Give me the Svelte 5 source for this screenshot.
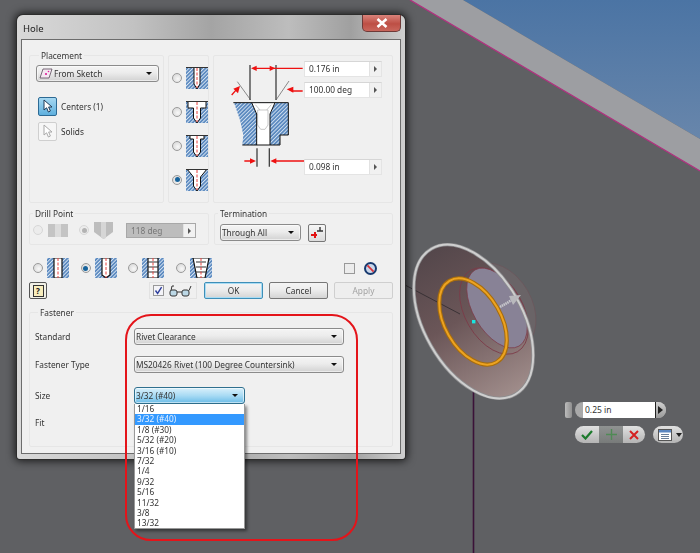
<script lang="ts">
  // Inventor "Hole" dialog over a sketch in the 3D viewport
  const sizes = ["1/16", "3/32 (#40)", "1/8 (#30)", "5/32 (#20)", "3/16 (#10)", "7/32", "1/4", "9/32", "5/16", "11/32", "3/8", "13/32"]
  let size = $state("3/32 (#40)")

  const holeTypes = [
    { path: "M8 0V17L11 22L14 17V0Z", selected: false },
    { path: "M2 0V7H7.5V17L11 22L14.5 17V7H20V0Z", selected: false },
    { path: "M4 0V4H7.5V17L11 22L14.5 17V4H18V0Z", selected: false },
    { path: "M1 0L7.5 8V17L11 22L14.5 17V8L21 0Z", selected: true },
  ]
  const threadTypes = [
    { path: "M7 0V20H15V0Z", threaded: false, selected: false },
    { path: "M7 0V17L11 20L15 17V0Z", threaded: false, selected: true },
    { path: "M6 0V20H16V0Z", threaded: true, selected: false },
    { path: "M3 0L7 20H15L19 0Z", threaded: true, selected: false },
  ]
</script>

{#snippet radio(checked: boolean, disabled = false)}
  <span class="radio" class:checked class:disabled></span>
{/snippet}

{#snippet spinner(value: string, disabled = false)}
  <div class="spinner" class:disabled>
    <span class="value">{value}</span>
    <span class="spin-arrow"></span>
  </div>
{/snippet}

{#snippet select(value: string, cls = "")}
  <div class="select {cls}">
    <span class="select-text">{value}</span>
    <span class="caret"></span>
  </div>
{/snippet}

{#snippet cursor(color: string)}
  <svg width="12" height="14" viewBox="0 0 12 14">
    <path d="M2 1V11L4.6 8.8L6.4 13L8.4 12L6.6 8H10Z" fill="#fff" stroke={color} stroke-width="1" />
  </svg>
{/snippet}

<div class="canvas">
  <svg class="scene" width="700" height="553" viewBox="0 0 700 553">
    <defs>
      <pattern id="hatch" width="2.6" height="2.6" patternUnits="userSpaceOnUse" patternTransform="rotate(45)">
        <rect width="2.6" height="2.6" fill="#5585bd" />
        <rect width="1" height="2.6" fill="#d5e3f2" />
      </pattern>
      <pattern id="hatch-big" width="8" height="8" patternUnits="userSpaceOnUse" patternTransform="rotate(45)">
        <rect width="8" height="8" fill="#5585bd" />
        <rect width="3" height="8" fill="#cfdff0" />
      </pattern>
      <linearGradient id="sky" x1="0" y1="0" x2="0" y2="1">
        <stop offset="0" stop-color="#4b74a4" />
        <stop offset="1" stop-color="#6886ab" />
      </linearGradient>
      <linearGradient id="cone" x1="0" y1="0" x2="1" y2="0">
        <stop offset="0" stop-color="#54474b" />
        <stop offset="0.45" stop-color="#6b5658" />
        <stop offset="1" stop-color="#a08d8b" />
      </linearGradient>
    </defs>
    <rect width="700" height="553" fill="#5f6063" />
    <polygon points="463,0 700,0 700,139" fill="url(#sky)" />
    <polygon points="410,0 463,0 700,139 700,171" fill="#9d9ea2" />
    <line x1="410" y1="0" x2="700" y2="171" stroke="#b0327f" stroke-width="1.4" />

    <line x1="473.5" y1="322" x2="473.5" y2="553" stroke="#3b1238" stroke-width="1.6" />
    <ellipse cx="499" cy="307" rx="47" ry="33" transform="rotate(60 499 307)" fill="#6a6467" stroke="#6b565c" stroke-width="0.7" />
    <g transform="translate(473.5 321.5) rotate(60)">
      <ellipse rx="84" ry="49" fill="url(#cone)" />
    </g>
    <ellipse cx="494" cy="311" rx="47" ry="29" transform="rotate(60 494 311)" fill="none" stroke="#7c3a48" stroke-width="0.8" />
    <ellipse cx="497" cy="308" rx="44" ry="24" transform="rotate(60 497 308)" fill="#888296" stroke="#7c3a48" stroke-width="0.7" />
    <line x1="405" y1="285" x2="460" y2="314" stroke="#2f2a2d" stroke-width="0.8" />
    <ellipse cx="473" cy="321.5" rx="47" ry="28" transform="rotate(60 473 321.5)" fill="none" stroke="#a86d0d" stroke-width="4.2" />
    <ellipse cx="473" cy="321.5" rx="47" ry="28" transform="rotate(60 473 321.5)" fill="none" stroke="#eda321" stroke-width="2" />
    <g transform="translate(473.5 321.5) rotate(60)">
      <ellipse rx="84" ry="49" fill="none" stroke="#8e8e90" stroke-width="3.6" />
      <ellipse rx="84" ry="49" fill="none" stroke="#cfcfcf" stroke-width="2" />
    </g>
    <line x1="500" y1="307" x2="512" y2="300" stroke="#c8c8cc" stroke-width="2.6" stroke-dasharray="1.5 0.6" />
    <polygon points="509,296 521,295 513,305" fill="#b9b9bd" />
    <rect x="472" y="320" width="3.4" height="3.4" fill="#19e6e0" />
  </svg>

  <section class="dialog">
    <header class="titlebar">
      <span class="title">Hole</span>
      <button class="close" aria-label="Close">
        <svg width="12" height="10" viewBox="0 0 12 10">
          <path d="M1.5 1L10.5 9M10.5 1L1.5 9" stroke="#fff" stroke-width="2.6" />
        </svg>
      </button>
    </header>

    <div class="client">
      <div class="top-row">
        <fieldset class="placement">
          <legend>Placement</legend>
          <div class="select">
            <svg class="sketch-icon" width="14" height="11" viewBox="0 0 14 11">
              <path d="M4 1H13L10 10H1Z" fill="#f4e8f2" stroke="#5b4a5a" stroke-width="0.8" />
              <circle cx="7" cy="6" r="1.1" fill="#e0209a" />
              <circle cx="9.5" cy="3.5" r="0.8" fill="#e0209a" />
            </svg>
            <span class="select-text">From Sketch</span>
            <span class="caret"></span>
          </div>
          <div class="pick-list">
            <div class="pick">
              <span class="pick-btn active">{@render cursor("#1d3a58")}</span>
              <span>Centers (1)</span>
            </div>
            <div class="pick">
              <span class="pick-btn">{@render cursor("#a9a9a9")}</span>
              <span>Solids</span>
            </div>
          </div>
        </fieldset>

        <fieldset class="hole-types">
          <legend class="blank"></legend>
          {#each holeTypes as t}
            <div class="type-row">
              {@render radio(t.selected)}
              <svg width="22" height="22" viewBox="0 0 22 22">
                <rect width="22" height="22" fill="url(#hatch)" />
                <path d={t.path} fill="#fff" stroke="#111" stroke-width="1" />
                <line x1="0" y1="0.5" x2="22" y2="0.5" stroke="#333" stroke-width="1" />
                <line x1="11" y1="1" x2="11" y2="21" stroke="#e8413c" stroke-width="1" stroke-dasharray="3 1.5" />
              </svg>
            </div>
          {/each}
        </fieldset>

        <fieldset class="dims">
          <legend class="blank"></legend>
          <div class="dims-body">
            <svg width="90" height="141" viewBox="12 153 270 423">
              <path d="M72 278H235V375H210V405H97L100 375L90 330Z" fill="url(#hatch-big)" />
              <path d="M125 278L140 312V405H180V312L195 278Z" fill="#fff" />
              <path d="M143 300H174V345L165 358H152L143 345Z M136 284L150 300M184 284L170 300" fill="none" stroke="#bdbdbd" stroke-width="2.5" />
              <path d="M70 278H235V375H210V405H97M125 278L140 312V405M195 278L180 312V405" fill="none" stroke="#111" stroke-width="3" />
              <path d="M120 165V270M198 165V270M141 415V470M178 415V470" stroke="#444" stroke-width="4" fill="none" />
              <path d="M82 215L122 270M237 213L198 270" stroke="#555" stroke-width="2" fill="none" />
              <path d="M135 175H278M103 453H130M192 453H283M65 255L80 238M278 243H245" stroke="#ee1111" stroke-width="4" fill="none" />
              <path d="M123 175L140 167V183ZM196 175L179 167V183ZM138 453L120 445V461ZM181 453L199 445V461ZM90 228L84 250L70 236ZM230 238L250 230V248Z" fill="#ee1111" />
            </svg>
            <div class="dims-inputs">
              {@render spinner("0.176 in")}
              {@render spinner("100.00 deg")}
              <div class="dims-spacer"></div>
              {@render spinner("0.098 in")}
            </div>
          </div>
        </fieldset>
      </div>

      <div class="mid-row">
        <fieldset class="drill">
          <legend>Drill Point</legend>
          <div class="drill-body">
            {@render radio(false, true)}
            <svg width="20" height="15" viewBox="0 0 20 15">
              <rect y="1" width="20" height="13" fill="#c4c4c4" />
              <rect x="7" y="1" width="6" height="13" fill="#dcdcdc" />
            </svg>
            <span class="radio-gap">{@render radio(true, true)}</span>
            <svg width="19" height="17" viewBox="0 0 19 17">
              <path d="M0 0H19V10L9.5 17L0 10Z" fill="#bdbdbd" />
              <path d="M7 0H12V16L9.5 17L7 15Z" fill="#d6d6d6" />
            </svg>
            <span class="drill-angle">{@render spinner("118 deg", true)}</span>
          </div>
        </fieldset>

        <fieldset class="termination">
          <legend>Termination</legend>
          <div class="term-body">
            {@render select("Through All", "term-select")}
            <span class="flip">
              <svg width="14" height="13" viewBox="0 0 14 13">
                <path d="M1 9H7M5 12V6" stroke="#e21212" stroke-width="2" fill="none" />
                <path d="M7 5H13M10 1V5" stroke="#333" stroke-width="1.4" fill="none" />
              </svg>
            </span>
          </div>
        </fieldset>
      </div>

      <div class="icon-row">
        {#each threadTypes as t}
          <div class="thread-item">
            {@render radio(t.selected)}
            <svg width="22" height="20" viewBox="0 0 22 20">
              <rect width="22" height="20" fill="url(#hatch)" />
              <path d={t.path} fill="#fff" stroke="#111" stroke-width="1.2" />
              {#if t.threaded}
                <path d="M6 4H16M6 9H16M6 14H16" stroke="#333" stroke-width="1.2" />
              {/if}
              <line x1="11" y1="0" x2="11" y2="20" stroke="#e8413c" stroke-width="1" stroke-dasharray="3 1.5" />
            </svg>
          </div>
        {/each}
        <div class="icon-row-end">
          <span class="check"></span>
          <svg width="13" height="13" viewBox="0 0 13 13">
            <circle cx="6.5" cy="6.5" r="5.5" fill="#c8d6ea" stroke="#17396f" stroke-width="2" />
            <path d="M3.4 3.4L9.6 9.6" stroke="#d8333a" stroke-width="1.8" />
          </svg>
        </div>
      </div>

      <div class="button-row">
        <button class="help" aria-label="Help">
          <span class="help-mark">?</span>
        </button>
        <div class="preview">
          <span class="check checked">
            <svg width="9" height="9" viewBox="0 0 9 9">
              <path d="M1.5 4.5L3.6 7.4L7.6 1.2" stroke="#2f3f9c" stroke-width="1.4" fill="none" />
            </svg>
          </span>
          <svg width="23" height="12" viewBox="0 0 23 12">
            <path d="M2 5.5L3 1H5M8 7H13M20 5.5L22 1" stroke="#333" fill="none" />
            <rect x="1" y="5" width="7" height="6" rx="2" fill="#bcd8e6" stroke="#333" />
            <rect x="13" y="5" width="7" height="6" rx="2" fill="#bcd8e6" stroke="#333" />
          </svg>
        </div>
        <button class="btn default">OK</button>
        <button class="btn">Cancel</button>
        <button class="btn ghost">Apply</button>
      </div>

      <fieldset class="fastener">
        <legend>Fastener</legend>
        <div class="form">
          <span class="form-label">Standard</span>
          {@render select("Rivet Clearance")}
          <span class="form-label">Fastener Type</span>
          {@render select("MS20426 Rivet (100 Degree Countersink)")}
          <span class="form-label">Size</span>
          <div class="size-wrap">
            {@render select(size, "open")}
            <ul class="menu">
              {#each sizes as s}
                <li class:current={s === size}>{s}</li>
              {/each}
            </ul>
          </div>
          <span class="form-label">Fit</span>
          <span class="fit-slot"></span>
        </div>
      </fieldset>
    </div>
  </section>

  <div class="callout"></div>

  <div class="mini">
    <div class="mini-top">
      <span class="grip"></span>
      <div class="mini-input">
        <span class="mini-value">0.25 in</span>
        <span class="mini-arrow"></span>
      </div>
    </div>
    <div class="mini-bottom">
      <div class="pill">
        <span class="seg">
          <svg width="12" height="10" viewBox="0 0 12 10"><path d="M1 5L4.5 8.5L11 1" stroke="#1c7a2c" stroke-width="2.2" fill="none" /></svg>
        </span>
        <span class="seg off">
          <svg width="11" height="11" viewBox="0 0 11 11"><path d="M5.5 0V11M0 5.5H11" stroke="#4f8a55" stroke-width="1.4" /></svg>
        </span>
        <span class="seg last">
          <svg width="10" height="10" viewBox="0 0 10 10"><path d="M1 1L9 9M9 1L1 9" stroke="#d42020" stroke-width="2" /></svg>
        </span>
      </div>
      <div class="pill menu-pill">
        <svg width="14" height="12" viewBox="0 0 14 12">
          <rect x="0.5" y="0.5" width="13" height="11" fill="#fff" stroke="#555" />
          <rect x="1" y="1" width="12" height="2.5" fill="#5b86c0" />
          <path d="M3 5.5H11M3 7.5H11M3 9.5H11" stroke="#6a7f9a" />
        </svg>
        <span class="pill-caret"></span>
      </div>
    </div>
  </div>
</div>

<style>
  :global(body) {
    margin: 0;
    overflow: hidden;
  }

  .canvas {
    position: relative;
    width: 700px;
    height: 553px;
    overflow: hidden;
    font-family: "Noto Sans", "Liberation Sans", sans-serif;
    font-size: 8.3px;
    color: #333;
  }
  .scene {
    position: absolute;
    inset: 0;
  }

  /* window */
  .dialog {
    position: absolute;
    left: 17px;
    top: 15px;
    width: 388px;
    height: 444px;
    box-sizing: border-box;
    padding: 0 4px;
    border-radius: 6px 6px 3px 3px;
    background: linear-gradient(90deg, #d9d9d9, #c2c2c2 30%, #a4a4a4 50%, #bdbdbd 70%, #a0a0a0 86%, #cfcfcf);
    box-shadow: 0 0 0 1px #2d2d2d, 0 0 9px 2px rgba(0, 0, 0, 0.75);
    filter: blur(0.3px);
  }
  .titlebar {
    display: flex;
    align-items: flex-start;
    justify-content: space-between;
    height: 24px;
  }
  .title {
    margin: 7px 0 0 2px;
    font-size: 9.5px;
    color: #222;
  }
  .close {
    width: 39px;
    height: 17px;
    padding: 0;
    margin: 0;
    display: flex;
    align-items: center;
    justify-content: center;
    border: 1px solid #6e3a38;
    border-top: 0;
    border-radius: 0 0 5px 5px;
    background: linear-gradient(#d9827a, #bd4f45 55%, #c9665c);
  }
  .client {
    height: 415px;
    box-sizing: border-box;
    padding: 9.5px 7px 0;
    border: 1px solid #6c6c6c;
    background: #f0f0f0;
  }

  /* group boxes */
  fieldset {
    margin: 0;
    min-width: 0;
    padding: 0;
    border: 1px solid #e6e6e6;
    border-radius: 2px;
    box-sizing: border-box;
  }
  legend {
    margin-left: 3px;
    padding: 0 2px;
    height: 11px;
    line-height: 11px;
    font-size: 8.3px;
    color: #333;
  }
  legend.blank {
    width: 0;
    padding: 0;
    margin: 0;
  }

  .top-row {
    display: grid;
    grid-template-columns: 135px 41px 180px;
    column-gap: 4px;
    height: 153.5px;
  }
  .placement {
    padding: 4px 4px 0 6px;
  }
  .pick-list {
    display: flex;
    flex-direction: column;
    gap: 6px;
    margin: 15px 0 0 2px;
  }
  .pick {
    display: flex;
    align-items: center;
    gap: 4px;
  }
  .pick-btn {
    display: flex;
    align-items: center;
    justify-content: center;
    width: 19px;
    height: 19px;
    box-sizing: border-box;
    border: 1px solid #cfcfcf;
    border-radius: 2px;
    background: #f6f6f6;
  }
  .pick-btn.active {
    border-color: #2d6a94;
    background: linear-gradient(#a6d8f2, #5fb0de);
  }

  .hole-types {
    display: flex;
    flex-direction: column;
    gap: 12px;
    padding: 6px 0 0 3px;
  }
  .type-row {
    display: flex;
    align-items: center;
    gap: 4px;
  }

  .dims-body {
    display: flex;
  }
  .dims-inputs {
    display: flex;
    flex-direction: column;
    gap: 5px;
    width: 78px;
  }
  .dims-spacer {
    height: 51px;
  }

  .spinner {
    display: flex;
    align-items: center;
    justify-content: space-between;
    height: 16px;
    box-sizing: border-box;
    border: 1px solid #e4e4e4;
    border-top-color: #d6d6d6;
    background: #fff;
    font-size: 8.3px;
  }
  .spinner .value {
    padding-left: 4px;
  }
  .spin-arrow {
    width: 11px;
    height: 100%;
    flex: none;
    position: relative;
    background: #f1f1f1;
    border-left: 1px solid #e2e2e2;
  }
  .spin-arrow::after {
    content: "";
    position: absolute;
    left: 4px;
    top: 4px;
    border-left: 3px solid #555;
    border-top: 3px solid transparent;
    border-bottom: 3px solid transparent;
  }
  .spinner.disabled {
    border-color: #a8a8a8;
    background: #bdbdbd;
    color: #777;
    height: 15px;
  }

  /* combos */
  .select {
    display: flex;
    align-items: center;
    height: 17px;
    box-sizing: border-box;
    padding: 0 6px 0 1px;
    border: 1px solid #8b8b8b;
    border-radius: 3px;
    background: linear-gradient(#f4f4f4, #ececec 45%, #d2d2d2);
    box-shadow: inset 0 0 0 1px rgba(255, 255, 255, 0.55);
  }
  .select-text {
    flex: 1;
    white-space: nowrap;
  }
  .sketch-icon {
    margin: 0 1px 0 1px;
  }
  .caret {
    flex: none;
    border-top: 3px solid #111;
    border-left: 3px solid transparent;
    border-right: 3px solid transparent;
  }
  .select.open {
    border-color: #2f708f;
    background: linear-gradient(#d9f0fb, #a9dbf4 50%, #6cbde8);
  }

  .mid-row {
    display: grid;
    grid-template-columns: 180px 179px;
    column-gap: 5px;
    margin-top: 4.5px;
    height: 37.5px;
  }
  .drill-body {
    display: flex;
    align-items: center;
    height: 100%;
    padding: 0 0 0 3px;
    margin-top: -1px;
  }
  .drill-body > svg {
    margin-left: 5px;
  }
  .radio-gap {
    display: flex;
    margin-left: 11px;
  }
  .drill-angle {
    width: 70px;
    margin-left: 13px;
  }
  .term-body {
    display: flex;
    align-items: center;
    gap: 7px;
    padding: 5px 0 0 5px;
  }
  .term-body :global(.term-select) {
    width: 81px;
  }
  .flip {
    display: flex;
    align-items: center;
    justify-content: center;
    width: 18px;
    height: 18px;
    box-sizing: border-box;
    border: 1px solid #777;
    border-radius: 2px;
    background: linear-gradient(#f6f6f6, #dcdcdc);
  }

  .radio {
    display: block;
    flex: none;
    position: relative;
    width: 10px;
    height: 10px;
    box-sizing: border-box;
    border: 1px solid #9a9a9a;
    border-radius: 50%;
    background: radial-gradient(circle at 60% 60%, #f8f8f8, #d2d2d2);
  }
  .radio.checked::after {
    content: "";
    position: absolute;
    inset: 1.5px;
    border-radius: 50%;
    background: #17639c;
  }
  .radio.disabled {
    border-color: #d6d6d6;
    background: #ececec;
  }
  .radio.disabled.checked::after {
    background: #b3b3b3;
  }

  .icon-row {
    display: flex;
    align-items: center;
    gap: 11.5px;
    height: 20px;
    margin-top: 13px;
    padding-left: 4px;
  }
  .thread-item {
    display: flex;
    align-items: center;
    gap: 4px;
  }
  .icon-row-end {
    display: flex;
    align-items: center;
    gap: 9px;
    margin-left: auto;
    padding-right: 16px;
  }
  .check {
    display: flex;
    align-items: center;
    justify-content: center;
    width: 11px;
    height: 11px;
    box-sizing: border-box;
    border: 1px solid #999;
    background: #ececec;
  }
  .check.checked {
    background: #f4f4f8;
  }

  .button-row {
    display: flex;
    align-items: center;
    height: 17px;
    margin-top: 4px;
  }
  .help {
    width: 18px;
    height: 17px;
    padding: 0;
    margin-right: 102px;
    border: 1px solid #555;
    border-radius: 2px;
    background: #f1f0e6;
  }
  .help-mark {
    display: block;
    width: 9px;
    height: 10px;
    margin: 0 auto;
    border: 1px solid #333;
    background: #f8edbc;
    font: bold 8px/10px "Noto Sans", sans-serif;
    color: #111;
  }
  .preview {
    display: flex;
    align-items: center;
    gap: 5px;
    width: 48px;
    height: 17px;
    box-sizing: border-box;
    padding-left: 3px;
    margin-right: 7px;
    border: 1px solid #e2e2e2;
  }
  .btn {
    width: 59px;
    height: 17px;
    padding: 0;
    margin-right: 6px;
    font: inherit;
    color: #333;
    border: 1px solid #777;
    border-radius: 2px;
    background: linear-gradient(#f4f4f4, #ededed 45%, #d4d4d4);
  }
  .btn.default {
    border-color: #3e8fb8;
    box-shadow: inset 0 0 0 1px #a9dcf4;
  }
  .btn.ghost {
    margin-right: 0;
    color: #a3a3a3;
    border-color: #cfcfcf;
    background: #eeeeee;
  }

  .fastener {
    margin-top: 7.5px;
    padding: 10.5px 7px 15px 5px;
  }
  .form {
    display: grid;
    grid-template-columns: 99px 210px;
    grid-template-rows: 17px 17px 20px 16px;
    row-gap: 11px;
    align-items: end;
  }
  .form-label {
    line-height: 17px;
  }
  .size-wrap {
    position: relative;
    width: 111px;
  }
  .menu {
    position: absolute;
    z-index: 2;
    left: 0;
    top: 17px;
    width: 111px;
    height: 125px;
    margin: 0;
    padding: 0;
    box-sizing: border-box;
    list-style: none;
    background: #fff;
    border: 1px solid #999;
    border-top: 0;
    box-shadow: 2px 2px 3px rgba(0, 0, 0, 0.45);
  }
  .menu li {
    height: 10.4px;
    line-height: 10.4px;
    padding-left: 2px;
    font-size: 8.3px;
  }
  .menu li.current {
    background: #3399ff;
    color: #e8f2ff;
  }

  /* red hand-drawn highlight */
  .callout {
    position: absolute;
    left: 125px;
    top: 314px;
    width: 233px;
    height: 227px;
    box-sizing: border-box;
    border: 2px solid #e4141a;
    border-radius: 26px;
    pointer-events: none;
  }

  /* heads-up input */
  .mini {
    position: absolute;
    left: 565px;
    top: 402px;
    display: flex;
    flex-direction: column;
    gap: 8px;
  }
  .mini-top {
    display: flex;
    gap: 3px;
  }
  .grip {
    width: 7px;
    height: 16px;
    border-radius: 2px;
    background: linear-gradient(90deg, #bcbcbc, #8f8f8f);
  }
  .mini-input {
    display: flex;
    width: 91px;
    height: 16px;
    box-sizing: border-box;
    padding-left: 8px;
    border-radius: 8px;
    overflow: hidden;
    background: #a9a9a9;
  }
  .mini-value {
    flex: 1;
    padding-left: 2px;
    line-height: 16px;
    font-size: 8.5px;
    background: #fff;
    border-right: 1px solid #222;
  }
  .mini-arrow {
    position: relative;
    flex: none;
    width: 10px;
    background: linear-gradient(#d0d0d0, #9a9a9a);
  }
  .mini-arrow::after {
    content: "";
    position: absolute;
    left: 2px;
    top: 4px;
    border-left: 5px solid #222;
    border-top: 4px solid transparent;
    border-bottom: 4px solid transparent;
  }
  .mini-bottom {
    display: flex;
    gap: 8px;
    padding-left: 10px;
  }
  .pill {
    display: flex;
    align-items: center;
    height: 17px;
    border-radius: 8.5px;
    overflow: hidden;
    background: linear-gradient(#e0e0e0, #b4b4b4);
  }
  .seg {
    display: flex;
    align-items: center;
    justify-content: center;
    width: 24px;
    height: 100%;
  }
  .seg.off {
    background: linear-gradient(#8f9291, #787b7a);
  }
  .seg.last {
    width: 22px;
  }
  .menu-pill {
    gap: 4px;
    width: 30px;
    padding-left: 5px;
    box-sizing: border-box;
  }
  .pill-caret {
    border-top: 4px solid #222;
    border-left: 3px solid transparent;
    border-right: 3px solid transparent;
  }
</style>
